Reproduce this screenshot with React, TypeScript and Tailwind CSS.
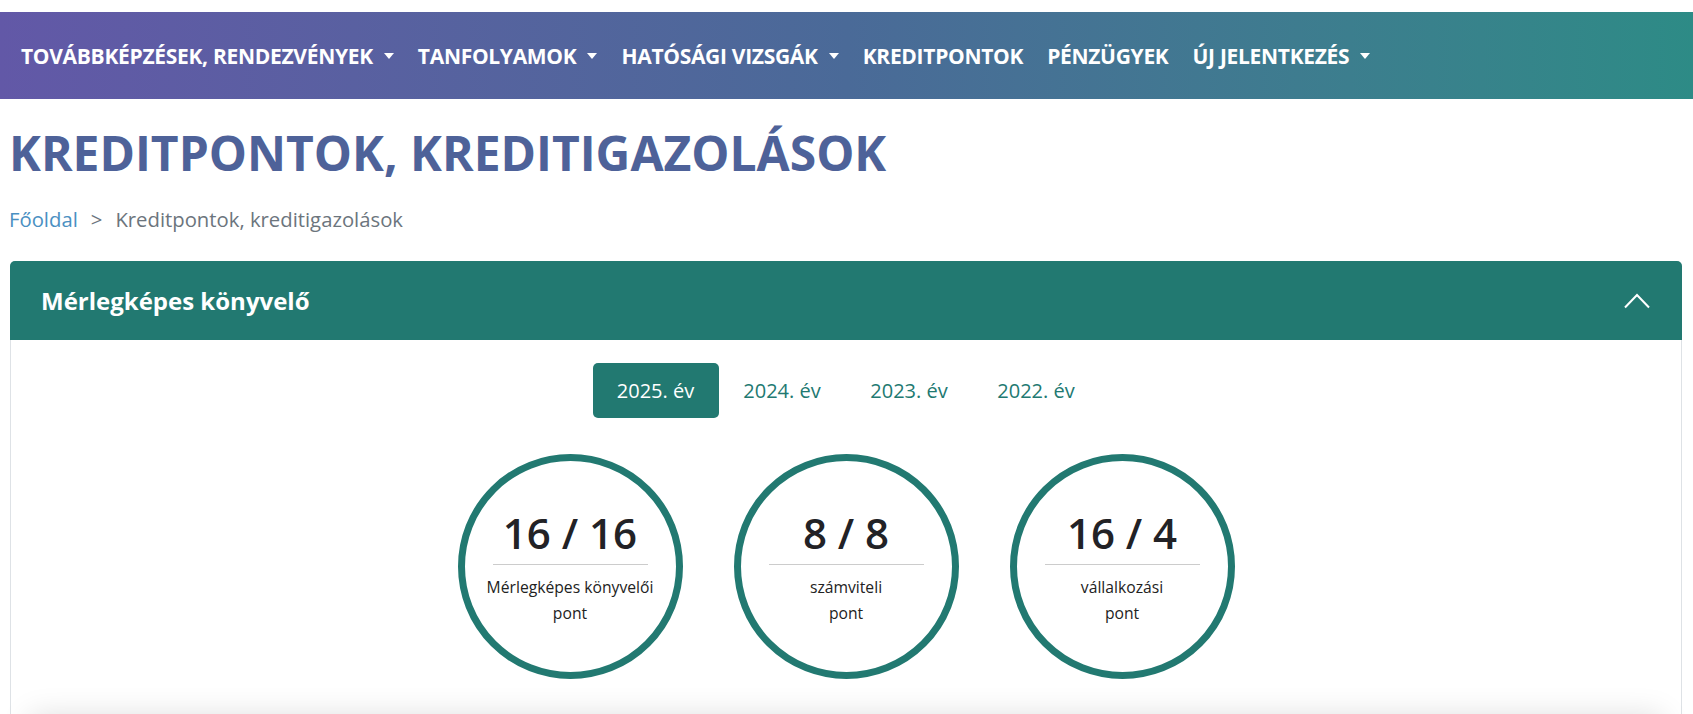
import React from "react";

const font = { fontFamily: '"Open Sans", "Noto Sans", sans-serif' };

function Caret() {
  return (
    <span className="ml-[11px] inline-block h-0 w-0 border-x-[5px] border-t-[6px] border-x-transparent border-t-white align-middle" />
  );
}

const navItems: { label: string; caret: boolean }[] = [
  { label: "TOVÁBBKÉPZÉSEK, RENDEZVÉNYEK", caret: true },
  { label: "TANFOLYAMOK", caret: true },
  { label: "HATÓSÁGI VIZSGÁK", caret: true },
  { label: "KREDITPONTOK", caret: false },
  { label: "PÉNZÜGYEK", caret: false },
  { label: "ÚJ JELENTKEZÉS", caret: true },
];

const years = ["2025. év", "2024. év", "2023. év", "2022. év"];

const circles: { value: string; lines: string[] }[] = [
  { value: "16 / 16", lines: ["Mérlegképes könyvelői", "pont"] },
  { value: "8 / 8", lines: ["számviteli", "pont"] },
  { value: "16 / 4", lines: ["vállalkozási", "pont"] },
];

export default function App() {
  return (
    <div className="h-[714px] overflow-hidden bg-white" style={font}>
      <div className="h-[12px]" />
      <nav className="flex h-[87px] items-center bg-gradient-to-r from-[#6258a7] via-[#4a6a98] to-[#2d8b86] pl-[9px]">
        {navItems.map((item) => (
          <div
            key={item.label}
            className="flex items-center px-[12px] text-[21px] font-bold leading-[30px] tracking-[-0.3px] text-white"
          >
            <span>{item.label}</span>
            {item.caret && <Caret />}
          </div>
        ))}
      </nav>

      <div className="pl-[9px] pr-[11px]">
        <h1 className="mt-[25px] text-[48px] font-bold leading-[57px] text-[#4e6299]">
          KREDITPONTOK, KREDITIGAZOLÁSOK
        </h1>
        <div className="mt-[23px] flex items-center text-[20.3px] leading-[30px]">
          <span className="text-[#4a90c2]">Főoldal</span>
          <span className="mx-[13px] text-[#6c757d]">&gt;</span>
          <span className="text-[#6c757d]">Kreditpontok, kreditigazolások</span>
        </div>

        <div className="mt-[27px] ml-[1px] rounded-t-[5px] border border-[#dee2e6]">
          <div className="-m-[1px] flex h-[79px] items-center justify-between rounded-t-[5px] bg-[#227971] pl-[31px] pr-[32px]">
            <span className="text-[24px] font-bold text-white">Mérlegképes könyvelő</span>
            <svg width="26" height="16" viewBox="0 0 26 16" fill="none">
              <path d="M1 14.5 L13 2 L25 14.5" stroke="white" strokeWidth="2" />
            </svg>
          </div>

          <div className="pt-[24px]">
            <div className="flex justify-center">
              <div className="flex">
                {years.map((y, i) => (
                  <div
                    key={y}
                    className={
                      i === 0
                        ? "flex h-[55px] w-[126px] items-center justify-center rounded-[5px] bg-[#227971] text-[20px] text-white"
                        : "flex h-[55px] w-[127px] items-center justify-center text-[20px] text-[#227971]"
                    }
                  >
                    {y}
                  </div>
                ))}
              </div>
            </div>

            <div className="mt-[36px] flex justify-center gap-[51px]">
              {circles.map((c) => (
                <div
                  key={c.value}
                  className="flex h-[225px] w-[225px] flex-col items-center justify-center rounded-full border-[7px] border-[#227971]"
                >
                  <div className="text-[42px] font-semibold leading-[50px] text-[#222226]">{c.value}</div>
                  <div className="mt-[6px] h-px w-[155px] bg-[#cccccc]" />
                  <div className="mt-[9px] text-center text-[15.7px] leading-[26px] text-[#222]">
                    {c.lines.map((l) => (
                      <div key={l}>{l}</div>
                    ))}
                  </div>
                </div>
              ))}
            </div>

            <div className="mx-[18px] mt-[36px] h-[60px] rounded-[6px] bg-white shadow-[0_0_30px_rgba(0,0,0,0.13)]" />
          </div>
        </div>
      </div>
    </div>
  );
}
